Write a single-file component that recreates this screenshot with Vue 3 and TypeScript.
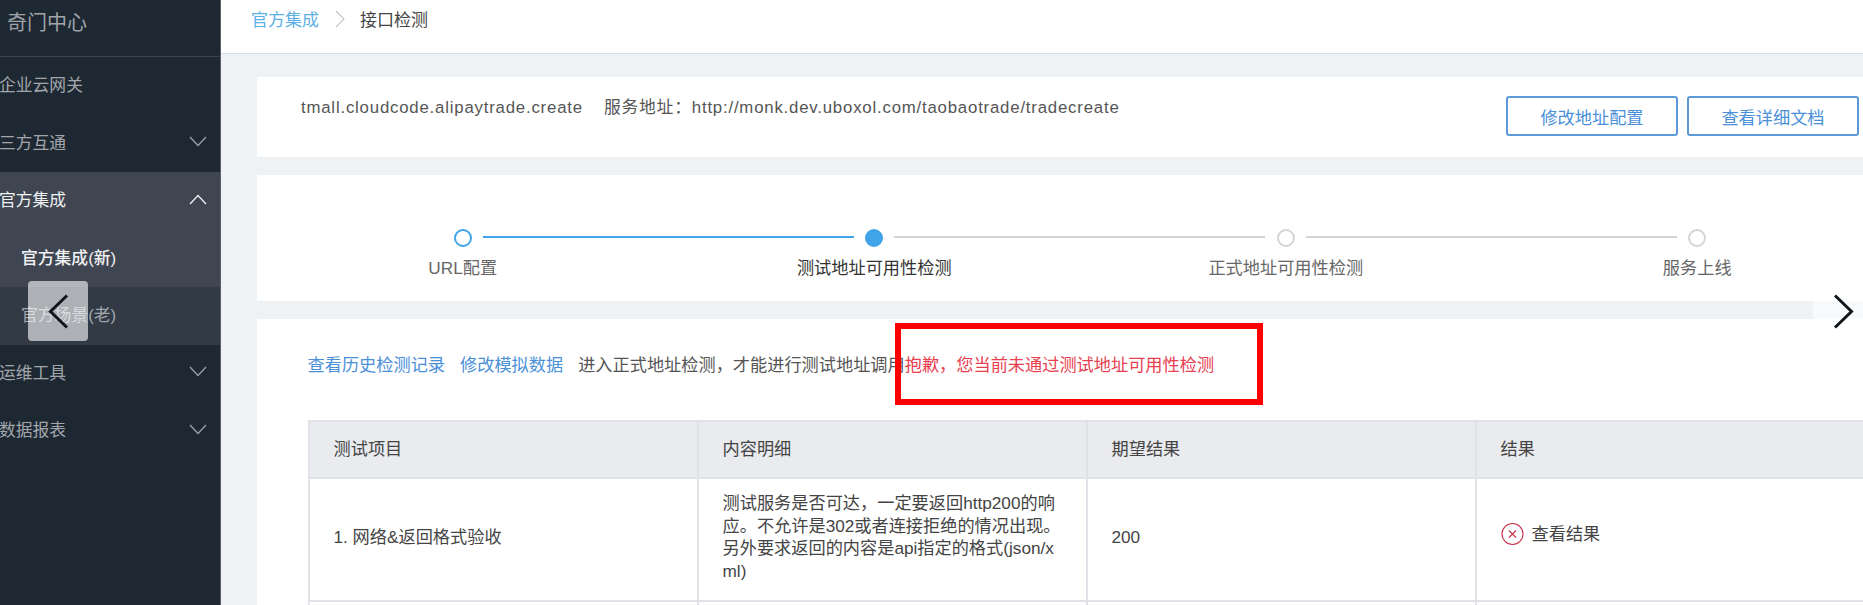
<script setup lang="ts">
interface MenuItem {
  label: string;
  arrow?: 'up' | 'down';
  kind?: 'active' | 'sub-current' | 'sub';
}

const menu: MenuItem[] = [
  { label: '企业云网关' },
  { label: '三方互通', arrow: 'down' },
  { label: '官方集成', arrow: 'up', kind: 'active' },
  { label: '官方集成(新)', kind: 'sub-current' },
  { label: '官方场景(老)', kind: 'sub' },
  { label: '运维工具', arrow: 'down' },
  { label: '数据报表', arrow: 'down' },
];

const steps = [
  { label: 'URL配置', state: 'done' },
  { label: '测试地址可用性检测', state: 'current' },
  { label: '正式地址可用性检测', state: 'todo' },
  { label: '服务上线', state: 'last' },
];

const columns = ['测试项目', '内容明细', '期望结果', '结果'];
</script>

<template>
  <div class="page">
    <aside class="side">
      <div class="side-title">奇门中心</div>
      <div
        v-for="item in menu"
        :key="item.label"
        class="menu-row"
        :class="item.kind"
      >
        <span class="menu-label">{{ item.label }}</span>
        <svg v-if="item.arrow" class="menu-arrow" width="18" height="11" viewBox="0 0 18 11">
          <path v-if="item.arrow === 'down'" d="M1 1l8 8.5L17 1" />
          <path v-else d="M1 10l8-8.5L17 10" />
        </svg>
      </div>
    </aside>

    <main class="main">
      <div class="crumbs">
        <span class="crumb-link">官方集成</span>
        <svg class="crumb-sep" width="10" height="18" viewBox="0 0 10 18">
          <path d="M1 1l8 8-8 8" />
        </svg>
        <span>接口检测</span>
      </div>

      <div class="content">
        <section class="card card-api">
          <div class="api-text">
            <span>tmall.cloudcode.alipaytrade.create</span>
            <span>服务地址：http://monk.dev.uboxol.com/taobaotrade/tradecreate</span>
          </div>
          <div class="api-actions">
            <button class="btn">修改地址配置</button>
            <button class="btn">查看详细文档</button>
          </div>
        </section>

        <section class="card card-steps">
          <div v-for="step in steps" :key="step.label" class="step" :class="step.state">
            <div class="step-track">
              <span class="step-dot"></span>
              <span v-if="step.state !== 'last'" class="step-line"></span>
            </div>
            <div class="step-label">{{ step.label }}</div>
          </div>
        </section>

        <section class="card card-result">
          <div class="notice">
            <a class="link">查看历史检测记录</a>
            <a class="link">修改模拟数据</a>
            <span class="notice-text">进入正式地址检测，才能进行测试地址调用</span><span class="notice-error">抱歉，您当前未通过测试地址可用性检测</span>
          </div>

          <table class="checks">
            <thead>
              <tr>
                <th v-for="col in columns" :key="col">{{ col }}</th>
              </tr>
            </thead>
            <tbody>
              <tr class="row-main">
                <td>1. 网络&amp;返回格式验收</td>
                <td>测试服务是否可达，一定要返回http200的响应。不允许是302或者连接拒绝的情况出现。另外要求返回的内容是api指定的格式(json/xml)</td>
                <td>200</td>
                <td>
                  <span class="result">
                    <svg width="23" height="24" viewBox="0 0 23 24" class="result-icon">
                      <circle cx="11.5" cy="12" r="10.5" />
                      <path d="M8 8.5l7 7M15 8.5l-7 7" />
                    </svg>
                    查看结果
                  </span>
                </td>
              </tr>
              <tr class="row-next">
                <td></td><td></td><td></td><td></td>
              </tr>
            </tbody>
          </table>
        </section>
      </div>
    </main>

    <!-- annotation drawn over the screenshot -->
    <div class="red-box"></div>

    <!-- image viewer prev / next -->
    <div class="viewer-btn viewer-prev">
      <svg width="21" height="35" viewBox="0 0 21 35"><path d="M19 1.5L2.5 17.5 19 33.5" /></svg>
    </div>
    <div class="viewer-btn viewer-next">
      <svg width="21" height="35" viewBox="0 0 21 35"><path d="M2 1.5l16.5 16L2 33.5" /></svg>
    </div>
  </div>
</template>

<style scoped>
.page {
  position: relative;
  display: flex;
  width: 1863px;
  height: 605px;
  overflow: hidden;
  background: #eff2f5;
  font-family: "Liberation Sans", "Noto Sans CJK SC", sans-serif;
  font-size: 17.2px;
  color: #555;
}

/* sidebar */
.side {
  flex: 0 0 221px;
  background: #1e2833;
  border-right: 1px solid #59606a;
  box-sizing: border-box;
  font-size: 16.8px;
}
.side-title {
  height: 57px;
  box-sizing: border-box;
  padding: 9px 0 0 7px;
  line-height: 28px;
  font-size: 20px;
  color: #9fa4a9;
  border-bottom: 1px solid #39424d;
}
.menu-row {
  height: 57.5px;
  box-sizing: border-box;
  display: flex;
  align-items: center;
  justify-content: space-between;
  padding: 0 13px 3px 0;
  color: #a2a6ab;
}
.menu-label {
  margin-left: -1px;
}
.menu-arrow path {
  fill: none;
  stroke: #9ba0a6;
  stroke-width: 1.3;
}
.menu-row.active {
  background: #3f4652;
  color: #f0f1f3;
}
.menu-row.active .menu-arrow path {
  stroke: #f0f1f3;
}
.menu-row.sub-current {
  background: #3f4652;
  color: #f0f1f3;
  font-weight: 500;
}
.menu-row.sub {
  background: #323a46;
}
.menu-row.sub-current .menu-label,
.menu-row.sub .menu-label {
  margin-left: 21px;
}

/* main column */
.main {
  flex: 1;
  min-width: 0;
}
.crumbs {
  height: 54px;
  box-sizing: border-box;
  display: flex;
  align-items: center;
  padding: 0 0 16px 30px;
  background: #fff;
  border-bottom: 1px solid #d8dce6;
  font-size: 17px;
  color: #444;
}
.crumb-link {
  color: #5cb0e4;
}
.crumb-sep {
  margin: 0 15px 0 16px;
}
.crumb-sep path {
  fill: none;
  stroke: #c4c8cc;
  stroke-width: 1.2;
}
.content {
  width: 1646px;
  padding: 23px 0 0 36px;
  display: flex;
  flex-direction: column;
  gap: 18px;
}
.card {
  background: #fff;
}

.card-api {
  height: 80px;
  box-sizing: border-box;
  padding: 19px 44px 0 44px;
  display: flex;
  justify-content: space-between;
}
.api-text {
  display: flex;
  gap: 21px;
  line-height: 24px;
  font-size: 16.8px;
  letter-spacing: 0.8px;
  color: #555;
}
.api-actions {
  display: flex;
  gap: 9px;
}
.btn {
  width: 172px;
  height: 40px;
  padding: 0;
  font: inherit;
  color: #4a90d9;
  background: #fff;
  border: 2px solid #5a9ad6;
  border-radius: 3px;
}

/* steps */
.card-steps {
  height: 126px;
  display: grid;
  grid-template-columns: repeat(4, 411.5px);
  padding-top: 54px;
  box-sizing: border-box;
}
.step {
  position: relative;
  display: flex;
  flex-direction: column;
  align-items: center;
  color: #666;
}
.step-track {
  position: relative;
  height: 18px;
}
.step-dot {
  display: block;
  width: 18px;
  height: 18px;
  box-sizing: border-box;
  border-radius: 50%;
  border: 2px solid #d4d4d4;
  background: #fff;
}
.step-line {
  position: absolute;
  top: 7px;
  left: 29px;
  width: 371px;
  height: 2px;
  background: #d4d4d4;
}
.step.done .step-dot {
  border-color: #3fa4e8;
}
.step.done .step-line {
  background: #3fa4e8;
}
.step.current .step-dot {
  background: #3fa4e8;
  border-color: #3fa4e8;
}
.step.current .step-label {
  color: #333;
}
.step-label {
  margin-top: 9px;
  line-height: 24px;
}

/* result card */
.card-result {
  height: 300px;
  padding: 0 0 0 50.5px;
  box-sizing: border-box;
}
.notice {
  height: 101px;
  display: flex;
  align-items: center;
  padding-bottom: 13px;
  box-sizing: border-box;
}
.link {
  color: #4a90d9;
  margin-right: 15px;
}
.notice-error {
  color: #e8404f;
}
.checks {
  width: 1558px;
  table-layout: fixed;
  border-collapse: collapse;
  color: #444;
}
.checks th,
.checks td {
  border: 2px solid #e0e2e7;
  padding: 0 24px 5px;
  text-align: left;
  font-weight: 400;
}
.checks th {
  height: 50px;
  background: #e9ebef;
}
.row-main td {
  height: 116px;
  line-height: 22.5px;
  word-break: break-all;
}
.row-next td {
  height: 40px;
}
.result {
  display: inline-flex;
  align-items: center;
  gap: 8px;
}
.result-icon circle,
.result-icon path {
  fill: none;
  stroke: #c9314a;
  stroke-width: 1.1;
}

/* overlays */
.red-box {
  position: absolute;
  left: 895px;
  top: 323px;
  width: 368px;
  height: 82px;
  box-sizing: border-box;
  border: 6px solid #f00;
}
.viewer-btn {
  position: absolute;
  top: 281px;
  width: 60px;
  height: 60px;
  display: flex;
  align-items: center;
  justify-content: center;
  background: rgba(255, 255, 255, 0.6);
  border-radius: 4px;
}
.viewer-btn path {
  fill: none;
  stroke: #11161c;
  stroke-width: 3;
}
.viewer-prev {
  left: 28px;
}
.viewer-next {
  left: 1813px;
}
</style>

<style>
html, body {
  margin: 0;
  overflow: hidden;
}
</style>
